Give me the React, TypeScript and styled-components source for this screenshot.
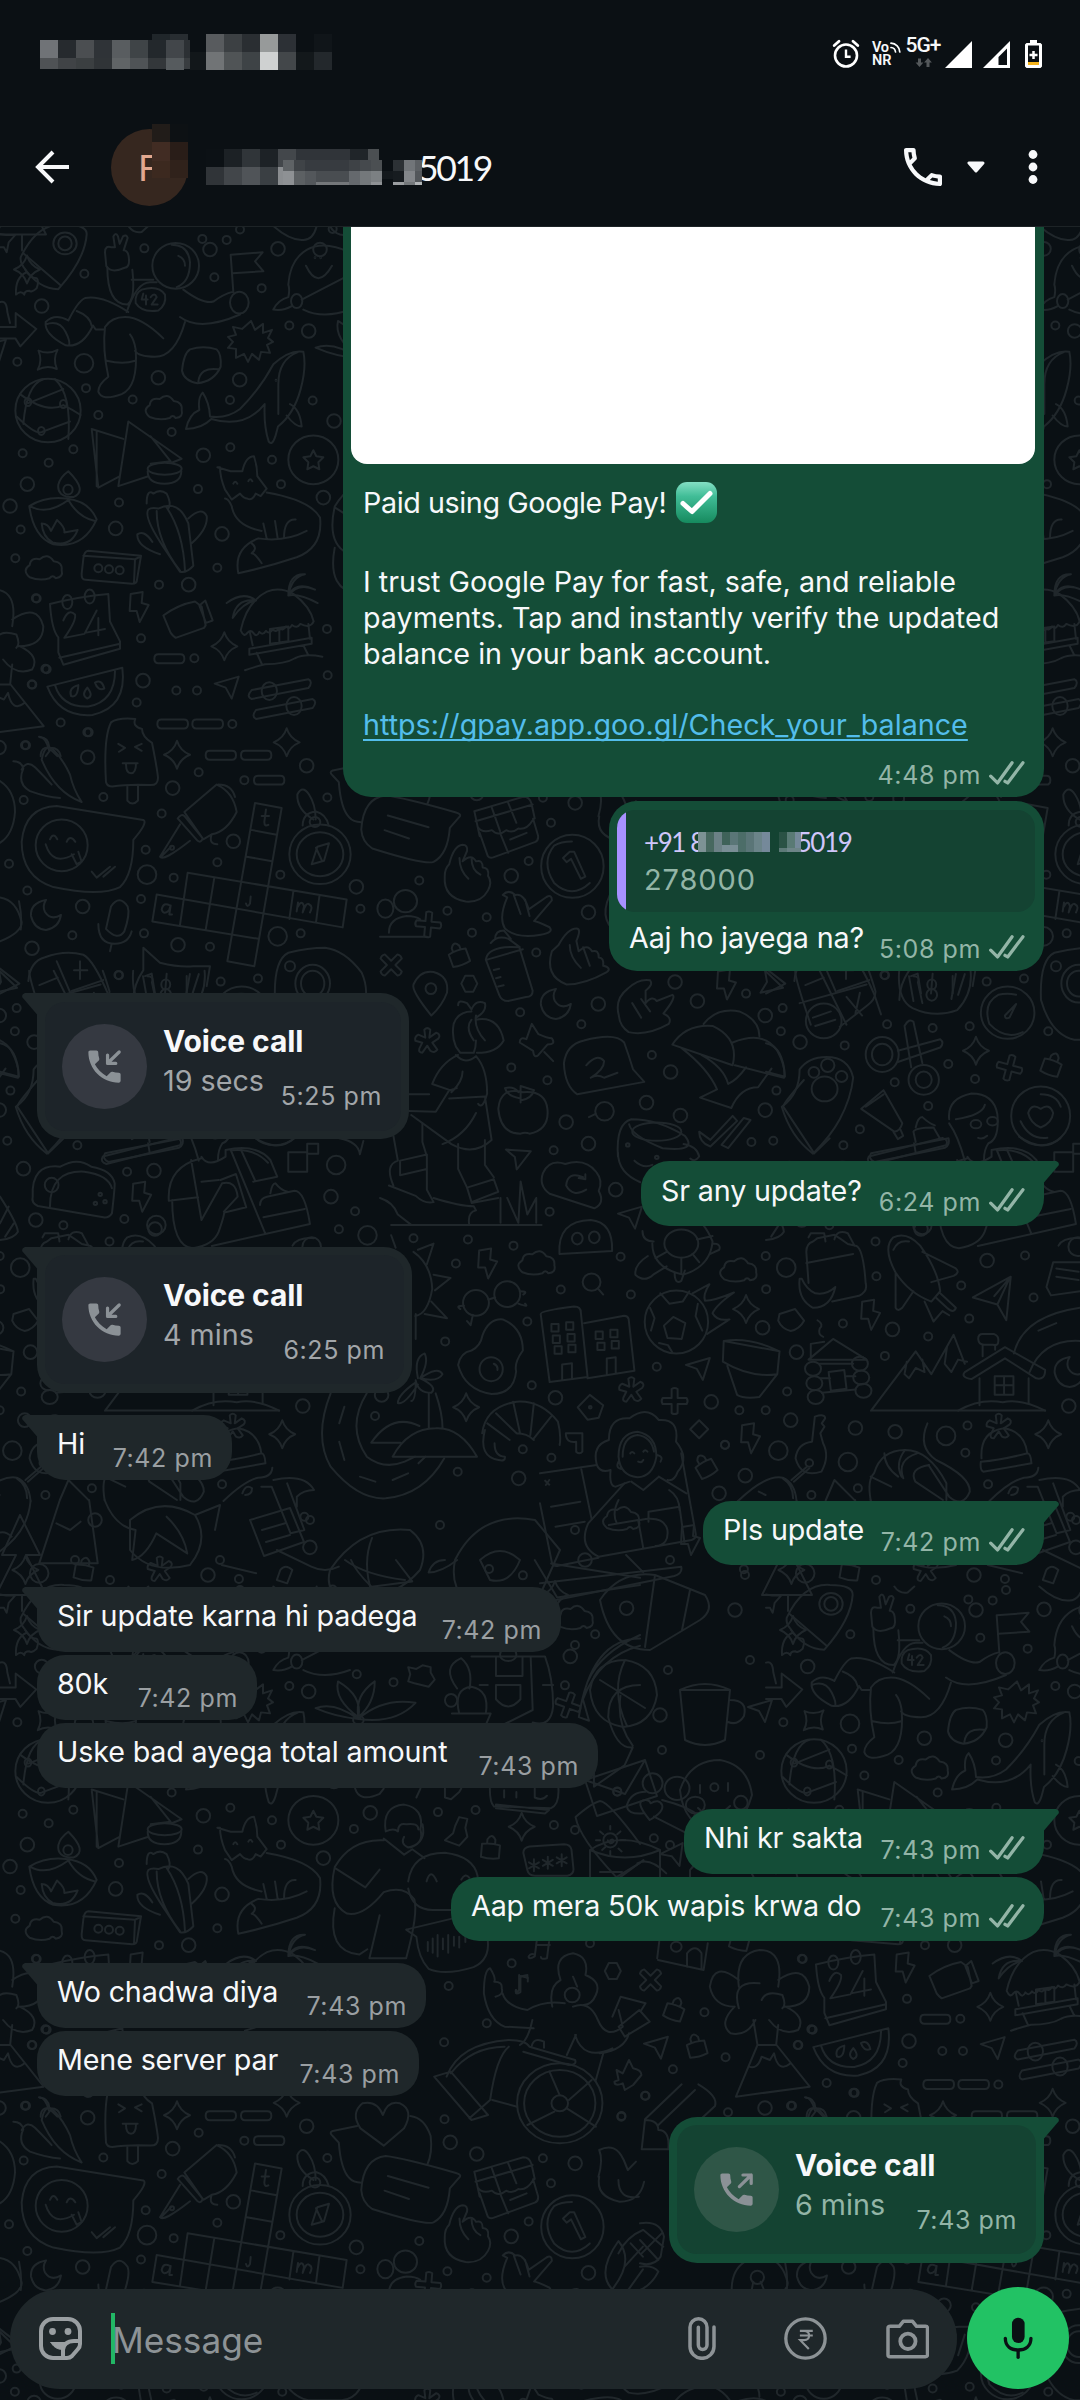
import React from "react";
import styled, { createGlobalStyle } from "styled-components";

const GlobalStyle = createGlobalStyle`
  * { box-sizing: border-box; }
  body { margin: 0; background: #0a1014; }
`;

const FONT = `Inter, "Open Sans", "Noto Sans", sans-serif`;

/* ------------------------------------------------------------------ */
/* Wallpaper                                                            */
/* ------------------------------------------------------------------ */

type Dot = [number, number];
type StampAt = [string, number, number, number?];
type Oval = [number, number, number, number];

interface SheetData {
  x: number;
  y: number;
  sx: number;
  sy: number;
  paths: string[];
  ovals?: Oval[];
  small?: Dot[];
  medium?: Dot[];
  large?: Dot[];
  stamps?: StampAt[];
}

const STAMPS: Record<string, string> = {
  sparkle: "M0-14Q3-4 13 0Q3 4 0 14Q-3 4-13 0Q-3-4 0-14z",
  bolt: "M-8-13L4-15L3-4L10-2L1 15L-2 4L-9 4z",
  cloud: "M-13 8q-8-7 0-12q1-8 10-6q8-7 14 2q9 1 8 9q2 7-6 8q-3-4-6 0q-10 3-20-1z",
  plane: "M-12-3L12-10L5 12L-1 1z",
  moon: "M0-15Q-16-12-15 1Q-12 14 0 15Q13 13 15 0Q5 6-1-3Q-4-9 0-15z",
  plus: "M-3-12q3-2 6 0v9h9q2 3 0 6h-9v9q-3 2-6 0v-9h-9q-2-3 0-6h9z",
  aster:
    "M-2-4L-3-12Q0-15 3-12L2-4L9-9Q14-7 11-3L5 1L10 8Q7 12 3 9L0 4L-5 11Q-9 11-8 7L-5 1L-12-1Q-13-5-9-7z",
  lock: "M-9-4q9-2 18 0v13q-9 2-18 0z M-4-5v-4q4-7 8 0v4",
  hex: "M-8 0l4-8h8l4 8-4 8h-8z",
  diamond: "M0-9L9 0L0 9L-9 0z",
  star: "M0-10l3 6 7 1-5 5 1 7-6-3-6 3 1-7-5-5 7-1z",
  burst:
    "M0-20l4 9 8-6 0 9 9-3-4 8 5 4-6 3 3 8-9-1-2 8-7-6-4 8-4-8-8 4 0-9-8-1 5-6-5-5 8-2-3-8 9 2z",
  tiny: "M0-6V6M-5-3L5 3M5-3L-5 3",
};

const SHEETS: SheetData[] = [
  {
    x: 0, y: 220, sx: 1 / 3, sy: 0.49745,
    paths: [
      "M0 28l18 2 28 0-20 15-6 20-8-10-12 0",
      "M62 75q50-70 130-66q70 0 68 20q-5 50-85 110q-60 0-105-45q-10-8-8-19z M70 67L180 130",
      "M80 105q-35 10-32 45q15-10 25 0q0-8 15-8q5 5 22-5q8-15 0-20q-20 0-35-18",
      "M315 65q0-15 20-10l10 0-5-22q8-10 14 0l5 15 10-15q10-5 14 3l-12 25q12 0 15 12q5 22-12 23q-40 12-55-3z",
      "M322 95q0 75 60 75q25-10 15-70 M395 120h65 M380 185q30-60 70-60h20 M535 72q20 5 20 20 M515 50q50 0 55 35q0 40-40 50",
      "M425 140q50-10 70 10q5 20-20 32q-50 5-68-15q-3-20 18-27z M430 148l-5 12h18m-5-8v18 M452 155q12-10 18 0l-15 15h18",
      "M550 140q60 30 90 24q30-15 60-20 M540 195q60 30 180-5 M700 145L692 70L788 65L765 83L790 103L698 107",
      "M555 205q-30 70-90 70q-50 0-60-12 M315 215q20-20 60-20q50 0 115 43 M315 215q-8 45 10 100q-30 15-30 30q10 20 70 5q50-15 42-90q-5-20-17-30 M320 283q50 8 85 0",
      "M385 185q-80-35-130-28q-20 5-50 45q-40-15-68 3q-5 25 60 47q50 5 82-40l8 8h25 M137 210q40-10 60 15q15 20 10 27 M230 183q40 10 45 30",
      "M0 215h47v-28l62 32-48 35-15-16H0 M0 165q20-5 22 20l8 22",
      "M558 420q10-30 40-38q-5-25 10-35q20 20 22 48q50 5 90-15q60-40 100-90q50-30 90-25q10 30-8 75q-20 50-68 75l-8 20q-10 20-20 10q-15-30-12-75q-60 50-160 30q-30 20-76 20z M835 330q0-50 60-65 M835 330v60 M870 370q30 10 35 45q-20 0-45-22",
      "M1050 65q-80-25-130-5q-50 20-55 70q5 10 0 25q-30 5-45 25q30 3 55-7 M910 180q60 20 140 0 M1050 110L905 160 M918 92q35 50 78 0",
      "M60 350q80 40 130 22q30 10 52 20 M85 368L190 340 M50 395q60 40 80 30l80-20 M130 320q-50 10-60 90 M165 320q50 30 40 120",
      "M275 420l20 118 62-22 M275 420l95 20 M290 425v110 M385 405l160 75-30 8 M385 405l-30 130 90-20 M452 435l60 50-60 5 M443 505q0 25 50 25q50 0 51-25",
      "M570 260q40-8 80 0q15 10 12 35q-20 30-70 33q-40-5-46-25q5-35 24-43z M595 325q5-30 60-25",
      "M652 497l40 8 35 0q10-30 35-30q10 20 10 40l28 25-18 15-15-5q-10 15-25 10q-10 0-22-10l-25 12-20-20q-15-25-15-45z M675 560q10 0 20 15q10 40 90 50 M800 548q130 15 160 50q10 60-70 80q-90 20-175 32q-15-50 60-70q80 8 145-15 M700 530q5-8 12 0 M745 525q5-8 12 0 M852 640q0-40 35-38 M825 605l8 35 M790 610l10 30 M755 650q20 10 0 20q10 0 30 20",
      "M88 575q50-20 110-15q70 5 92 42q-40 60-130 50q-60-15-72-77z M90 575q50 20 115-12q30 35 80 42 M205 505q60 40 15 52q-50 0-45-25q5-15 30-27z M125 610q20 0 28 15l18-22q25 15 22 25l40-5q-20 35-75 25q-30-10-33-38z",
      "M475 580q60-20 90 30l15 85q-20 15-40 12l-50-50q-60-60-45-75q10-5 30-2z M470 585q0 60 70 120 M500 578q50 50 55 128 M440 570q0-30 20-20q20-10 40 0q15 20 5 30 M565 600q40-25 55-5q5 25-45 55 M480 672q-70-15-68-40q20-10 45 15",
      "M265 665l158 10-12 48q0 8-15 8l-140-8q-12 0-11-12l5-30q2-15 15-16z M250 675l155 7-3 48 M405 682l18-6",
      "M150 772q90-15 175-20l5 55 30 40v15l-170 32-15-25v-30q-20-15-25-67z M178 880l182-28 M190 805q15-25 35-12q5 12-32 47l60-8 M290 785l-35 45 60-8 M295 800v35",
      "M490 795q45-22 95-28l20 10 12 38-5 5-85 20q-10-5-15-10z M598 775l18-10 22 40-20 5z",
      "M722 825q10 15 20 5q10-8 18 0q10 10 18-2q10 8 20-2q10 8 20-3q10 8 20-3q10 8 20-3q10 8 18-3q15 8 25-2q30 10 40-5q-10-30-60-55q-40-15-80-5q-60 20-79 78z M750 830l8 25 M925 812l5 30 M748 862l187-22v12l-187 22z M735 905q20-5 60-12q60 0 90-12q30-10 82-3 M770 870l15 22 M910 855l15 20 M810 822v30l55-5v-30z M838 820v30",
      "M865 755q0-45 50-43q-40 5-50 43q20-30 80-12q-50-15-80 12q30-5 88 15 M680 770q50-25 88-5q-60-5-70 35q30-30 70-35",
      "M142 938L367 900q15 80-90 95q-100 5-135-57z M165 935q20 45 100 43q80-10 80-72 M235 935q-30 5-22 22q20 5 22-22z M262 940q-20 15 0 22q20-5 0-22z M285 930q20-8 28 12q-20 5-28-12z",
      "M463 882q0-9 12-9h66q12 0 12 9t-12 9h-66q-12 0-12-9z M472 1013q0-9 12-9h68q12 0 12 9t-12 9h-68q-12 0-12-9z M577 1013q0-9 12-9h68q12 0 12 9t-12 9h-68q-12 0-12-9z M617 1076q0-9 12-9h67q12 0 12 9t-12 9h-67q-12 0-12-9z M723 1076q0-9 12-9h67q12 0 12 9t-12 9h-67q-12 0-12-9z M762 1126q0-9 12-9h67q12 0 12 9t-12 9h-67q-12 0-12-9z",
      "M755 945l170-22q15 5 0 18l-170 22q-18-5 0-18z M768 985l170-22q15 5 0 18l-170 22q-15-5 0-18z",
      "M318 1130q-8-90 15-120q20-10 73-7q-10 15 20 20q0 15 30 28q15 50 18 70q0 15-22 15q-70-2-115 3q-15 0-19-9z M382 1137v30q15 12 32 0v-30 M355 1053l20 8-18 8 M425 1053l-20 6 20 8 M368 1092h45 M378 1094q0 18 15 18q15 0 15-20",
      "M125 1085q10-35 35-20q30 20 50 50q10 30 35 55q-80-20-120-85z M40 1088q25 0 30 15q-20 30 20 45q50 12 90 14 M120 1040q25 0 28 20 M65 1105q15-20 40-5q30 20 50 35",
      "M65 1250q10-70 105-72l260 28q15 5-30 40q0 70-40 95q-60 20-200 0q-95-20-95-91z M137 1255q20 45 85 20 M150 1245q10-15 22 0 M200 1250q10-15 26 0 M275 1310l15 12 40-22 M310 1320l35-20 M215 1275l15 20 15-5-10-20",
      "M0 1128q45 20 45 62q-5 45-45 62 M0 1362q50 5 65 50q0 20-65 38 M0 1505l58 30-58 20",
      "M553 1190L650 1135q50 15 60 55q-30 40-75 45l-25 10z M533 1203q10-10 20-5l55 45q-5 10-15 5z M540 1215l-60 65q10 10 90-32 M483 1280l30-20 M635 1235q-10 20 17 20 M655 1135q40 0 50 25",
      "M765 1172L845 1182L763 1500L682 1490z M753 1226l77 10 M740 1280l76 9 M563 1312L1040 1366L1028 1422 M470 1356L1028 1422 M470 1356L457 1410L775 1445 M563 1312L540 1417 M643 1322L617 1427 M880 1350L868 1405 M958 1360L948 1412",
      "M785 1198h22 M798 1185l-5 25q0 10 12 6 M510 1378q-20-8-25 8q5 12 22 2l5-10-4 18h8 M752 1360l-2 14q-8 10-12 0 M890 1390l4-18 0 8q12-15 18 0l-4 12q10-22 20-16q12 4 2 16",
      "M908 1217q0-25 40-28q30 5 38 28 M940 1205q-50-20-48-50q15-20 35 0q20 20 20 50 M935 1295l17-35 35-7-15 35z M948 1262l18 26",
      "M318 1425l15-45q25-25 50 0q8 15-10 50q-20 20-55-5z M295 1415q0 40 50 40q40 0 50-25 M335 1455l-5 15",
      "M85 1530q5-40 50-48q60-15 115-5q30 10 75 80l20 40 M170 1490l40 62 M118 1538l55-15 M222 1508l40 0 M240 1490v36 M215 1550l95-22",
      "M400 1568q0-30 30-60v-45l50 30q60 10 100 7h50l-10 40 M435 1520l20-5 10 40 M500 1515l-5 40 M560 1520v35",
      "M825 1568q-5-80 40-95q60-10 110-10q60 5 110 50q20 30 10 60q0 70-70 75h-100q-70-10-100-80z",
      "M385 12q15 15 40 12l20-12 M820 12q50 30 90 28q30 0 40-28",
    ],
    ovals: [
      [195, 47, 35, 22], [195, 47, 20, 14], [527, 92, 70, 46], [718, 166, 28, 22], [890, 163, 17, 14],
      [144, 383, 98, 64], [84, 366, 10, 8], [190, 370, 10, 8], [124, 424, 10, 8], [494, 500, 51, 12],
      [940, 482, 75, 49], [204, 542, 14, 10], [202, 768, 15, 14], [269, 757, 15, 14], [295, 700, 12, 8], [327, 702, 12, 8],
      [359, 704, 12, 8], [808, 947, 23, 18], [882, 977, 23, 18], [185, 1257, 78, 52], [516, 1262, 6, 4],
      [960, 1275, 92, 60], [960, 1275, 70, 44], [945, 1210, 16, 10], [938, 1535, 52, 38], [938, 1535, 35, 26], [870, 1500, 15, 10],
      [945, 76, 1, 1], [962, 76, 1, 1], [828, 322, 1, 1],
    ],
    small: [
      [253, 108], [433, 57], [607, 38], [680, 40], [643, 115], [785, 137], [868, 212], [52, 285], [258, 338], [398, 361],
      [295, 392], [220, 461], [68, 469], [146, 488], [515, 426], [691, 457], [690, 362], [816, 482], [843, 531], [594, 541],
      [357, 568], [62, 622], [46, 680], [110, 761], [477, 733], [652, 699], [423, 841], [981, 822], [983, 915], [140, 903],
      [97, 934], [410, 970], [182, 1010], [266, 1030], [78, 1056], [596, 1110], [71, 1166], [310, 1160], [485, 1193], [437, 1266],
      [27, 1294], [521, 1322], [652, 1291], [841, 1316], [982, 1161], [423, 1365], [82, 1348], [217, 1438], [432, 1434], [630, 1461],
      [662, 1531], [357, 1518], [902, 1434], [774, 1525], [998, 18], [529, 946], [591, 946], [583, 881], [697, 1013], [733, 1126],
      [938, 363],
    ],
    medium: [
      [125, 173], [834, 58], [926, 223], [475, 317], [719, 321], [82, 531], [30, 575], [347, 620], [666, 631], [566, 733],
      [970, 558], [1002, 404], [429, 926], [263, 1080], [518, 1142], [700, 1249], [920, 1097], [534, 1457], [248, 1380],
      [96, 1464], [610, 473],
    ],
    large: [[252, 288], [441, 1316], [833, 1440]],
    stamps: [
      ["sparkle", 143, 281, 45], ["sparkle", 673, 857], ["sparkle", 531, 1075], ["sparkle", 860, 1050], ["bolt", 416, 778],
      ["cloud", 488, 380], ["cloud", 128, 702], ["plane", 680, 938], ["moon", 138, 1397], ["burst", 753, 243], ["star", 940, 483],
    ],
  },
  {
    x: 380, y: 800, sx: 0.4464, sy: 0.41454,
    paths: [
      "M155 155q10-45 30-47q12 0 10 15l-10 25q20-20 30 0q15-5 15 15q15 0 12 20q10 15 0 35q-15 30-50 27q-50-10-47-60q0-20 10-30 M178 140q0 30 20 50 M205 140q0 30 20 40",
      "M470 200q-40 40-80 0q-30-50 0-90q15-10 40-10 M410 140l15-15h10l25 60-10 5-22-48-10 8z",
      "M285 235q-20 50-5 75q25 25 80 15q30-5 20-18q-30-15-35-15l40-50q0-15-12-8l-40 30q-10-40-30-35q-15-15-28 0z M300 230l15 45 M325 240l10 40",
      "M400 350q20-40 40-40q12 0 0 30l5 25q20-20 30 0q15-5 15 15q12 0 10 20q20 5 8 15q-50 30-90 30q-50-20-33-80z M425 350q0 30 25 55 M455 355l15 45",
      "M535 520q-10-40 20-65q25-25 50-20q8 10-10 25v30q15-20 25-5l35-15q10 5-20 45q20 10 12 25q-50 30-90 20q-20-15-22-40z M565 490l20 35 M585 480l20 30",
      "M20 320q0-35 40-40q20 0 30 8 M0 330h105",
      "M237 385q5-35 75-30l30 105q0 15-15 15l-40 10q-15 0-20-15z M240 385l80-25 M248 345q15-20 40-10l25 20 M258 335q0-20 20-20l15 20 M255 410l12-3 M260 430l10-3 M265 450l12-3",
      "M115 520q-45-60-40-75q15-35 45-30q35 10 30 50q-10 30-35 55z",
      "M205 510q-30 0-40 30q-5 30 5 55l10 15h30q5-15 5-30 M175 495q0-15 20-5l10 15q10-25 30-15q5 20-20 35 M215 530q50-10 62 50q-15 30-60 30 M205 530q-15 20 5 50 M215 520q-5 30 20 60 M170 615q20 25 45 3 M175 615q-40 20-58 70l40 15 15-5 M215 618q25 30 25 90q-10 40-20 25 M155 720l80-5 15 105q-40 40-90 10l-90-70 M155 700l-30 52-60-2 M65 710h45 M140 830q50-20 75-75 M185 655q0 25-25 50",
      "M95 780v45l10 35 M45 870l60-15v35l-60 15z M175 830v60l20 45 M235 820v60l20 30 M195 935l60-20 10 30-60 25z M105 880v60l15 30q-20 5-40-15l-60-25 M0 960q30 10 40 40l30 25 M25 1025H362 M270 960v60 M285 960l25 60 5-100 15 80 20-40v60 M120 960q60 20 90 20l5 10q-20 5-15 35 M30 930q-20-50 10-60l-10-60 M205 972l60-12",
      "M340 540l15 25q20 10 30 10q10 15-10 15l-20 25q-10 10-12-10l-30-20q0-15 15-8z M368 608l20 22",
      "M412 635q5-45 45-55q70-20 90 5q10 30 20 65l25 30-150 30q-28-20-30-75z M462 640q25-30 40-10q0 20-30 40q15-10 30 0l30-12",
      "M320 705q-50-15-55 40q5 60 50 60q10-5 20 0q45-10 40-60q-5-45-55-40z M315 730v-40l30 10q-5 20-30 25 M315 720q-30-5-35-25q20-5 30 10",
      "M365 900q15-35 50-22q45-15 70 20q15 20 5 45q15 30-10 42l-100-35q-25-20-15-50z M455 910q-35-15-38 20q15 30 45 10 M445 912l15 3v-12",
      "M402 1095q-5-80 70-82q50 5 48 75z",
      "M533 860q-5-80 30-90q60 0 120 40q30 40-50 30q-70-30-75-58 M533 850q0 50 50 72 M680 830q30 5 35 30q-10 15-20 5 M570 870q20 20 40 10",
      "M655 590q30-50 90-45q60 30 45 95z M725 540q30-40 80-30q45 20 45 60 M790 585q70-30 100 20q20 40 15 65l-110-30 M675 598q60 50 80 100l-38 20 70 25q20-50 60-50l30-45 M720 615q50 30 60 70q20-10 40-40",
      "M900 740q40-30 40-90q20-30 60-30q50 0 60 50q-5 50-30 100q-20 40-60 83q-50-40-70-113z",
      "M1078 745l50-45 42 80q-5 20-18 20z M1088 740l40-30 M1150 800l10 18 12-8-6-15",
      "M715 800l25 20 50-58 10 12-60 62q-25-10-25-36z M765 832l50-65 15 5-50 68z",
      "M1160 605l95-28q10 8 0 20l-95 35 M1175 545q10-20 20-10l20 100 M1175 545l15 100",
      "M985 412l60 130 M940 490l150-45 M930 412q0 20 35 130 M1095 412q10 30 15 50q0 20-20 35l-60 50 M970 525l40-15 M975 545l45-15 M1045 475l35 45 M1065 515l10-50",
      "M1163 412q-5 70 30 90q50 25 100 5q35-40 30-95 M1185 425l10 60 M1205 440l10 50 M1290 420l-10 60 M1310 420l-15 50 M1195 425q15 0 10 15",
      "M1440 560q-40 20-75-20q-15-50 20-70q20-5 40 0 M1400 520l25-28-15 33q-10 5-10-5z",
      "M1275 770q-5-50 50-62q50 0 58 50q5 60-20 70q-10 15-10 40 M1275 780q20 30 35 90 M1290 770q60-10 65-35 M1340 815q10 5 20-5 M1385 845q50-5 80 30",
      "M1480 745q-20-15-28 10q5 25 28 35q25-10 28-35q-8-25-28-10z M1435 775q20 45 60 40 M1525 740q-10-30-45-30",
      "M1095 860l165-45q15 5 8 18l-165 45q-15-5-8-18z M1200 825l-5-25q5-10 45-10l15 28 M1200 790q5-25 15-25q15 15 28 20",
      "M610 1070q0 60 70 75q60-20 65-80q-10-25-20-38 M588 1040q0 25 25 25 M600 1100q-30 20-28 45q20 20 40 0l30-20 M660 1140q0 30 15 20l8-25 M745 1070q20 0 15 15l-20 10 M642 1090l-25 15 M700 1095l15 20 M675 1104v38 M710 1060l35-8",
      "M488 1178l12 15 M468 765l15-8",
      "M243 1205l15-5 M188 1220q-20 0-8 8 M208 1242l-5 25-8-10 M313 1185q20 0 8 8 M310 1215q25 10 15 0",
      "M230 1290q15-40 45-37q45 20 45 75q-20 30-15 50q-5 55-55 55q-60-10-75-70q5-30 30-35q20-10 25-38z M255 1360q10 5 8 15",
      "M75 1090q40 30 42 90q-10 60-38 65 M85 1085l35-15-15 50 M120 1145l38 8-35 30 M115 1210l35 40-50-10 M80 1240v60 M25 1050l10 30",
      "M85 1395q-10-50 15-60q10 20-10 60q40-30 50-10q-10 20-50 10q40 20 25 35q-30 0-35-30q0 50-10 50 M85 1410q-30 50-45 45q0-20 40-50",
      "M360 1240q0-8 75-18q15 0 15 15l15 155-85 12z M457 1262l90-18q8 0 10 8l13 125-105 18 M408 1400v-38l22-3v38 M508 1385v-38l20-3v38",
      "M384 1264h16v18h-16z M417 1260h16v18h-16z M387 1292h16v18h-16z M420 1288h16v18h-16z M391 1318h16v18h-16z M422 1314h16v18h-16z M483 1282h16v18h-16z M516 1278h16v18h-16z M487 1309h16v18h-16z M519 1305h16v18h-16z",
      "M657 1247l27 15-8 38-32-2-8-30z M628 1190l20 25 30-5 15-25 M712 1215l-5 30 15 35 M605 1225l10 25-8 30 M625 1310l20 5 10 18 M700 1190l38-22q-15 25-10 40q20 0 65-20q-40 30-48 50q10 20 38 15l-50 35",
      "M955 1090q0-20 15-25l10-8 38-8q15 10 30 22l20 5q15 10 20 90q5 20-15 30l-60 14 M955 1090l5 75 M955 1117l105-22 M960 1055l5-10h30l3 20 M1018 1060q5-25 30-15l15 30 M940 1155q-5 50 30 70q40 0 50-50q-20 20-45 15q-20-10-30-35z",
      "M1150 1055q30-15 60 20q40 60 45 110l-20 25q-50-20-80-70q-30-60-5-85z M1150 1085q10-25 35-20 M1215 1090l75 40q10 10-5 18l-50 15 M1155 1140v85q5 10 15 0l25-40 M1220 1210l20 48 20-25 15 10 M1255 1190l35 35q-5 15-20 0l-25-25",
      "M1328 1200l85-50-10 105-20-38z M1383 1217l28-65-35 45",
      "M1568 1115h-60l-15 60 10 20 65-10 M1515 1130l50 8 M1515 1150l50 8 M1520 1075q10-20 48-18",
      "M1420 1335q20-90 148-110 M1455 1380q30-80 113-75 M1475 1280l40-18",
      "M770 1305l125 25-5 55q-60 10-122-30z M770 1305q60-10 125 25 M778 1365l22 70q15 10 50 5l40-55",
      "M960 1350l55-50 75 50z M965 1350v-38l30-5 M985 1360h75 M988 1395h20 M1045 1390h20 M990 1430l75-8 M1005 1380l35-5 5 45-35 5z M980 1255q15 10 5 20q-5 15 8 20",
      "M1100 1473L1200 1330l35 55 50-95 25 70 M1100 1473H1490 M1180 1355l-5 30 10 10 15-25 20 10-5-30 M1270 1320l-5 40 15 20 15-30 20 5 M1310 1380l90-60 90 55q0 25-20 20l-70-48-75 50q-25-5-15-17z M1343 1395v65 M1453 1395v60",
      "M1340 1300q0-12 10-12h25q12 5 10 18q0 12-12 8h-20q-12 0-13-14z M1350 1314v28 M1378 1314v12 M1377 1390h42v45h-42z M1398 1390v45 M1377 1412h42 M1295 1473q50-30 100-20q40-10 95 20",
      "M470 1435l30 25-10 30-25 5-22-30z M895 1240l35-12 20 28q-10 20-30 25q-20-5-28-25z",
    ],
    ovals: [
      [431, 160, 70, 76], [57, 244, 26, 27], [12, 262, 18, 22], [114, 455, 12, 13], [442, 1058, 12, 14], [480, 1055, 12, 14],
      [996, 697, 29, 30], [972, 657, 12, 13], [1003, 640, 15, 16], [1034, 667, 13, 13], [1125, 614, 37, 42], [1125, 614, 23, 26],
      [1218, 675, 34, 36], [1218, 675, 18, 20], [994, 533, 40, 42], [1236, 445, 10, 12], [1236, 470, 12, 14], [1406, 513, 60, 63],
      [1335, 782, 12, 10], [1372, 775, 12, 10], [1480, 762, 66, 71], [675, 1070, 38, 34], [474, 1163, 20, 21], [215, 1213, 29, 31],
      [285, 1192, 29, 31], [249, 1373, 26, 29], [664, 1259, 71, 76], [970, 1372, 18, 17], [973, 1407, 18, 17], [976, 1440, 18, 17],
      [1075, 1360, 18, 17], [1078, 1393, 18, 17], [1083, 1425, 18, 17], [555, 832, 4, 4], [620, 862, 4, 4], [471, 1465, 3, 3],
      [620, 800, 55, 22],
    ],
    small: [
      [383, 55], [333, 147], [88, 194], [151, 267], [239, 283], [206, 320], [350, 368], [314, 512], [451, 541], [294, 645],
      [375, 676], [389, 845], [609, 615], [820, 467], [902, 502], [898, 558], [888, 701], [832, 825], [881, 822], [1041, 592],
      [1136, 541], [1238, 550], [1321, 546], [1153, 681], [1228, 738], [1075, 794], [1038, 833], [1273, 637], [1333, 673],
      [1130, 422], [1497, 558], [380, 993], [197, 1060], [299, 1075], [75, 1057], [170, 1118],
      [146, 1306], [330, 1258], [405, 1181], [562, 1193], [539, 1102], [864, 1100], [865, 1180], [1110, 1065], [1112, 1149],
      [1037, 1263], [1302, 1171], [1320, 1251], [1228, 1294], [1131, 1341], [1445, 1099], [1464, 1200], [912, 1427], [805, 1472],
      [864, 1472], [620, 1367], [340, 1412], [773, 1556], [1316, 1509],
    ],
    medium: [
      [294, 183], [467, 271], [661, 439], [711, 485], [489, 492], [863, 520], [941, 584], [651, 656], [597, 730], [673, 761],
      [863, 748], [467, 829], [417, 777], [528, 940], [1148, 1277], [1360, 1111], [933, 1332], [857, 1273], [742, 1452],
      [393, 1442], [1543, 1462], [1065, 1515], [1154, 1524], [920, 1496], [1212, 1035],
    ],
    large: [[910, 1128], [1268, 1534], [503, 751]],
    stamps: [
      ["plus", 108, 300, 5], ["plus", 25, 398, 45], ["lock", 176, 375, -20], ["hex", 200, 443], ["moon", 394, 492],
      ["aster", 106, 583], ["plane", 305, 860, 20], ["cloud", 348, 1120], ["cloud", 800, 1137], ["bolt", 240, 1118],
      ["bolt", 1098, 1242], ["bolt", 775, 445], ["plane", 870, 440, 60], ["plus", 1410, 646, 15], ["lock", 1505, 640, 20],
      ["sparkle", 1335, 605], ["sparkle", 820, 1228], ["sparkle", 193, 1465], ["sparkle", 1497, 1530], ["aster", 563, 1425],
      ["plus", 660, 1450], ["diamond", 715, 1518], ["plane", 712, 1370], ["moon", 1545, 1380], ["plane", 560, 1005],
    ],
  },
  {
    x: 0, y: 739.5, sx: 0.4082, sy: 1 / 3,
    paths: [
      "M938 45q-15-45-50-35q-30 30-5 75l57 52 50-52q25-55-10-75q-30-10-42 35z",
      "M875 78l-60 15q-10 5 0 15l15 20q5 80 25 105q10 15 30 15 M1005 48q35 5 50 60q5 50-8 85",
      "M885 270q5-95 60-102q40 5 170 50q15 5 12 12l-25 35q-5 80-40 102q-20 10-150-40q-25-20-27-57z M950 228l100 35 M942 272l60 25",
      "M1175 290l-13-75 120-43q15 0 20 20l8 45 M1175 280l20 70q5 8 15 3l100-45q10-5 8-20l-12-50 M1205 205l20 70 M1245 190l20 60 M1165 245l140-50 M1170 262q10 20 35 10q15 20 35 0q15 10 30-5q20 5 35-25 M1250 300l40-20 M1225 280l20 60",
      "M1468 150q40-25 60 30l10 30 20-25 M1468 230q-10 60 50 75q50 0 60-60 M1468 150q10 30-2 80 M1515 240q0 60 50 50",
      "M1500 568q-40-50 15-145q40 60-15 145 M1515 460q20-50 60-70 M1530 500l45-60 M1540 568l35-60 M1545 430l30 40",
    ],
    medium: [[873, 442], [1103, 127], [1168, 162], [1409, 190]],
    small: [[883, 508], [1089, 58], [1330, 175], [1522, 50]],
  },
  {
    x: 640, y: 729.5, sx: 1 / 3, sy: 1 / 3,
    paths: [
      "M5 178l10-90 110-105 M5 178h80l140-130q10-30-50-65 M15 90q40 0 40 30q35 0 30 58 M55 105L165 0",
      "M495 22q20 0 30 40 M500 80q0-30 30-25q25 0 30 25 M515 80l15-20 20 20",
      "M275 600q0-60 40-85 M435 515q10 50 5 85 M340 575l-5 25 M362 575l10 25",
      "M0 400q60-10 72 40l-10 60q-20 30-62 20 M10 420l60 50 M0 450l55 60 M65 430l-60 60 M0 530q40-5 55 15q-20 40-55 55",
    ],
    ovals: [[352, 562, 20, 20]],
    small: [[264, 67], [453, 47], [640, 8], [15, 17]],
    medium: [[375, 54]],
  },
  {
    x: 0, y: 980, sx: 0.3444, sy: 1 / 3,
    paths: [
      "M50 380L140 520L185 475 M50 380q0-10 60-80 M0 190q50 10 55 100l-55-15 M0 650q50 80 52 105q-10 20-52 25 M0 730l25-50 M15 770l25-40",
      "M95 650q-5-100 80-90q50-30 90 0q60 10 68 50q0 20-8 90q-10 15-25 12L110 678q-20-10-15-28z M145 680q0-110 100-105q70 10 80 50",
      "M305 520l225-45q5 20-10 28l-205 43q-20-10-10-26z M430 490l5 30",
      "M490 660q-5-100 95-125v-5q20 35 70 0v-20q90-20 130 30l20 50-70 15 M490 662l85-10 M555 540l30 180 60-110q40-10 45 40l-40 45 M585 605l50-5 M500 660q0 140 60 145q60-10 75-50q20-60 15-60 M670 510l100 250 M700 510l40 90 M640 600l45-18 30 100-60 15 M615 798L900 732 M755 675q0-20 20-25l80-18q30 0 45 100 M765 712l120-25 M785 640q5-30 15-30q15 20 35 25",
      "M837 517h55v58h-55z M892 491h32v30h-32z",
      "M960 1240q-50 130 0 220q80 100 160 95q110-10 170-120 M1065 1240q-60 100 0 190q50 40 110 15l30-15 M1000 1280l-15 50 M985 1385l15 55 M1045 1490l45 15 M1140 1500l45-20 M1215 1450l20-20",
      "M1140 1430h245q-50-90-120-85q-80 0-125 85z M1078 1388h85 M1078 1388q60-90 140-50 M1245 1240v105 M1265 1240q20 60 20 105",
      "M1400 1360q10-80 100-95q70-5 120 60q10 40 5 70 M1408 1350q-20 80 40 90q20 5 18-10q-30 0-30-40 M1440 1300l60 60 M1490 1265l20 95 M1415 1330l65 50 M1550 1270l-10 95 M1600 1310l-50 65 M1500 1360q30 0 50 20",
      "M735 470q70 50 120 5 M985 475q55 10 60 48l10-40",
    ],
    ovals: [[150, 615, 20, 22], [291, 643, 5, 5], [277, 670, 5, 5], [305, 665, 5, 5]],
    small: [[369, 575], [361, 717], [184, 736], [1031, 694], [984, 748], [1089, 1308], [1329, 1475], [1518, 1408]],
    medium: [[68, 566], [447, 572], [104, 720], [961, 650], [1506, 1495], [1108, 1245]],
    large: [[976, 555], [454, 735], [1067, 766], [905, 800]],
    stamps: [["bolt", 410, 650]],
  },
  {
    x: 540, y: 1140, sx: 0.3444, sy: 1 / 3,
    paths: [
      "M165 975q-15-60 35-75q0-70 60-65q50-40 85 5q60-5 50 65q40 50 5 90q-10 30-30 25 M165 975q10 25 40 15q-5 50 15 50l40-15",
      "M228 950q0-70 55-75q55 10 55 75q-10 60-55 62q-50-5-55-62z M240 950q0-60 43-65q40 5 48 50 M228 965q-10 20 10 22 M340 945q20 5 10 20 M262 940q5-8 12 0 M300 935q5-8 12 0 M285 965q10 5 15-5",
      "M265 1025l35 25 45-40 M345 1010l80 50 M245 1030L140 1150q-30 70 30 100L440 1200q15-5 12-20L410 940 M375 1050q30 20 30 60 M228 1080q-20 40-5 70 M200 1155l85-15 15 85 M315 1115l90-15 15 110 M315 1145v-30 M290 1140q70-15 80 30q5 45-35 48",
      "M0 1000l165-25 M120 988l30 150 M32 1100l85-15 M45 1160l85-15 M0 1090l35 180q5 10 15 8l120-25 M15 1022l12 12 M27 1020l-10 15 M0 1330l410-50q5 20-20 28L0 1390 M250 1245l50 52",
      "M790 905l8-75q30-10 30 5l-10 15 8 10-12 20 8 30q20 40-5 85q-60 20-75-40q5-45 48-50z M775 980l-45 40 M782 985l-45 40",
      "M575 1083q80-80 130-70q35 15 40 70 M705 1015q30 20 30 60 M635 1055l20 10",
      "M830 1080l25-60 60 62 M830 1080l-60 190h170l-25-190 M820 1150l40 20 30-25",
      "M575 1083q-70 50-80 130q20 70 130 40q110-60 120-170 M560 1130q30 30 20 90 M650 1180q20-10 40 10",
      "M960 1080q-10-60 10-80q20-70 90-70q70 0 120 100l0 50 M960 1010l60 30 M1000 940q0 40 40 70 M1060 930q-30 40-10 80 M1095 940q-60 20-40 75 M1130 975q-60 10-40 50l80 55 M1125 850q-30 70 25 110q100 50 98 95q-20 50-60 15l-60-95",
      "M960 1080q30 80 90 90l-10 90q40-10 70-80l90 60q-10-60-60-110",
      "M1282 955q-5-80 65-90q60 10 68 75 M1280 965q60-5 135-25q10 0 12 30l-140 25q-10-5-7-30z",
      "M1305 1083q60-60 100-70q40 0 42-30 M1360 1060q10-30 28-15q0 20-20 20 M1415 1040l30 0 55 140 40-10-50-140 M1450 1020q90-20 118 30q-30 0-50 20v30",
      "M1460 1230l100 50q40 20 80 0 M1470 1290q15-20 35 0l-15 40-30-10z M1400 1300l-100-25",
      "M75 880h48v55q-8 10-18 0v-30q-30 5-30-25z",
    ],
    ovals: [[782, 969, 11, 11]],
    small: [[537, 914], [33, 953], [788, 1065], [923, 1045], [1235, 938], [1301, 1033], [592, 1288], [1350, 1317], [1540, 1130]],
    medium: [[596, 1007], [520, 1060], [1260, 1305], [1556, 1222]],
    large: [[692, 932], [894, 966], [770, 1300]],
    stamps: [["bolt", 610, 895], ["lock", 480, 980, -30], ["aster", 1332, 862], ["sparkle", 730, 1290], ["lock", 900, 1290, 10], ["aster", 1120, 1290]],
  },
  {
    x: 0, y: 139.5, sx: 1, sy: 1,
    paths: [
      "M330 70q30-45 80-40q20 15 10 40q-30 35-80 25q-15-5-10-25z M345 60q20 15 60 20 M372 38q-10 25 0 55",
      "M250 20l40-12 14 34-40 14z M262 30l24-7 M266 42l24-7",
      "M455 60q25-50 80-40l25 30-20 45q-40 25-75 5q-15-15-10-40z M480 60q20-18 40 0q-10 25-30 20z",
      "M130 20q30-25 65-5q15 25-5 50q-40 10-60-15z M195 15l25-10-5 25",
      "M20 15l-18 40h14l-20 40h50l-20-40h14z M22 95v16",
      "M600 100q20-30 55-25l50 20q10 15-5 25l-50 30q-40 0-50-50z M655 75l-10 72 M690 90l-8 40",
      "M590 190q5-30 35-30q30 5 32 35q-5 30-34 32q-30-5-33-37z M600 180l45 28 M625 160q-15 30 2 66",
      "M680 190h50l-5 50q-20 10-40 0z M680 190q25-12 50 0 M730 200q18 0 14 16q-6 10-16 6",
      "M585 280l60-20 12 36-60 20z M585 280l40 14 20-34",
      "M680 290q10-30 40-30q28 5 32 35q-10 35-35 40q-34-10-37-45z M700 285v8 M728 283v8 M698 308q15 15 32-2",
      "M590 350q30-20 70 0v50q-35 15-70 0z M590 350q35 15 70 0 M600 372h22 M600 384h34",
      "M690 370q20-25 55-10l10 20-20 25q-30 10-45-10z",
    ],
    small: [[110, 80], [240, 90], [310, 20], [440, 25], [575, 30], [670, 60], [745, 75], [575, 145], [668, 170], [750, 160], [572, 240], [662, 250], [760, 255], [670, 345], [575, 330], [745, 345], [680, 425], [220, 60], [75, 60]],
    medium: [[320, 110], [95, 20], [430, 115], [585, 60], [735, 110], [660, 215], [672, 385], [210, 110]],
    stamps: [["sparkle", 27, 130], ["sparkle", 555, 95], ["bolt", 690, 40], ["plane", 760, 210], ["cloud", 620, 20], ["plus", 568, 205, 20], ["hex", 725, 30], ["lock", 740, 440, 15]],
  },
  {
    x: 0, y: 199.5, sx: 0.4082, sy: 0.3571,
    paths: [
      "M860 0q10 30 50 75l100-15q-20-30-40-60 M1310 0l55 105 203-35 M1350 10l218 40 M1050 35q10-35 40-35 M1050 35q30 0 70-35",
      "M878 440q-60-50-50-100q60 40 50 100 M878 440q-10-60 40-100q0 60-40 100 M878 445q-60-50-105-30q50 25 105 30 M878 445q60-60 140-45q-50 60-140 45",
      "M1000 300l20 5 15-10 20 5v15l10 20-15 20-35-10-15-5 5-20z",
      "M1107 430h95l-10 27 M1125 430q-15-70 30-75q45 10 35 75 M1120 360q-40-60 10-85q30 30 20 85",
      "M1155 270h180q20 60 20 140q-5 60-50 45 M1215 270v55h65v-55 M1215 350h60v40q-30 40-60 0z M1330 350h25 M1195 350h-20 M1300 270l5 150-70 40",
      "M1568 220q-120 0-150 220l25 10-15-60q40-120 140-150 M1490 440q0-90 78-90 M1490 440q20 90 60 85l-20 50-75 60v-50 M1520 380q-10 80 30 140 M1440 340q30-80 128-130",
      "M945 760q-10-70 45-75q50 10 40 70q10 40-30 50q-20-10-10-30 M945 760q20-10 30 0q0-25 20-20q30-5 30 15 M1035 740q10 50-30 65 M940 780l50 45 20-15 30 25 M820 860q40-80 120-75 M820 862l75 55 35-50 M820 860q-20 100 30 130q40 10 90-60q50-20 75 20q10 40-20 165h-90l25-120 M820 975q-20 120 60 130l20-15",
      "M1000 900q10-80 90-80q70 10 80 65q0 40-10 60 M1000 920q10 60 60 60h45 M1045 900q10-40 25 0 M1130 895q10-20 20-5",
      "M995 1035l110-30 M995 1035l25 20q5 60 30 90q40 20 110-5q40-20 35-75 M1048 1070v25 M1060 1060v40 M1072 1050v60 M1085 1060v30 M1098 1050v50 M1112 1055v25 M1125 1055v30 M1140 1050v20",
      "M1115 745l10-25 20 5-5 25 5 25-20 25-35-15 20-20z",
      "M1282 820q0-15 15-18l85-6q15 0 18 15l5 55q0 15-15 18h-80q-15 0-18-15z",
      "M1410 720q40-40 60-45q20 0 98 120 M1410 720q10 60 100 168l58-40 M1495 745v10 M1495 815v12 M1460 785h10 M1520 785h12 M1470 760l8 8 M1515 808l8 8 M1520 760l-8 8 M1475 812l8-8 M1495 785q8-6 8 4q-8 10-14-4",
      "M1200 640q0 40 10 50l140 5q20-10 18-55 M1235 645v20 M1265 650v15 M1310 640v25q20 10 30-5 M1215 685l130 15-10 10-120-15z",
      "M1315 1065l-5 45q-15 10-15 0q5-10 15-5 M1345 1070l-5 45q-15 5-15-3 M1315 1078h32 M1275 1165v45q-15 10-10-5 M1275 1165l18 5v10",
      "M870 640q10 40 60 15l10-15 M1020 665l10-25 M1090 640v25l15 5 20-20 5-10",
    ],
    ovals: [[878, 448, 13, 12], [1105, 393, 15, 18], [1245, 265, 20, 18], [1495, 785, 17, 20]],
    small: [[874, 320], [964, 342], [1384, 351], [1458, 208], [1198, 25], [1281, 43], [1512, 648], [1073, 706], [1165, 700], [1357, 742], [867, 753]],
    medium: [[1397, 270], [907, 708], [1535, 135]],
    stamps: [["lock", 1202, 808, 5], ["sparkle", 1278, 747], ["tiny", 1308, 855], ["tiny", 1342, 848], ["tiny", 1376, 841], ["cloud", 1405, 165]],
  },
  {
    x: 430, y: 419.5, sx: 0.41454, sy: 1 / 3,
    paths: [
      "M130 640q0-70 15-75q15 30 10 40q20 0 18 20q5 20-15 25 M130 640q10 80 50 100l70 5 M175 640q10 40 60 50q40-30 90-20 M247 720q-10 60-30 75",
      "M295 680q-10-60 20-80q-20-70 30-80q40 10 30 65q40 20 25 60q-10 30-30 30 M345 590l10 30 M345 680q40-20 60 40q20 60 60 20l-10-50 M455 740l50-50 25 35-60 45z M440 710l20-60 60 20-10 20 M410 820q60-10 70-60 M350 765q20 80 90 40 M330 825l22-60",
      "M313 946l-25-72 M330 985l70 55 M335 960l55-60 M300 995l-65 40 M40 890q30-100 150-110q40 0 50 20l110 40q5 15-15 15l-110-40 M10 890l40-15 90 130-40 15z M50 880q50-80 130-80 M190 800q-30 30-45 160l-50 55 M150 960l60 20 M400 900l18-80 M245 800q5-30 30-15v18",
      "M215 585v45q-10 15-8 0 M215 590l20-5v10",
      "M480 840l10 25q20 5 20 20l-20 30-20 15-5-20q-20 10-20-5l10-5-5-30 15 10z",
      "M745 620q-10-100 50-110q60 0 45 110 M745 600q-60-60-70 20q10 60 60 60 M840 600q60-50 75 20q0 60-60 60 M735 680q-40 50-10 80q40 10 60-40 M858 680q50 30 30 70q-40 20-70-30 M795 610q-70-10-50 75 M800 660q10-30 50-15q10 30 0 40 M780 720l10 75h45l5-60 M790 795L738 950l178-30-80-125 M770 860q20 10 30-30l20 10 10-20q10 60 40 30",
      "M550 540l110 30 10-80 M548 535l5-50 M620 560v-40q20-30 35 0v45",
      "M475 75q10-40 45-40 M530 120q-40-60-10-60q10 0 12 10q20-15 28 5q5 20-30 45z M560 60q60 20 80 40l-20 60-80-50 M475 75q0 30 40 25 M500 250q30-20 70 30 M455 295l60-55",
    ],
    ovals: [[343, 645, 18, 22], [313, 970, 103, 120], [313, 970, 86, 100], [313, 970, 20, 24], [594, 500, 13, 15], [537, 10, 24, 30], [596, 25, 30, 35], [640, 75, 23, 25]],
    small: [
      [45, 618], [137, 730], [34, 787], [197, 550], [662, 697], [713, 832], [586, 868], [520, 947], [897, 536], [920, 748],
      [887, 795], [540, 175], [462, 1008], [386, 490], [452, 35], [686, 22],
    ],
    medium: [[750, 68]],
    stamps: [["hex", 441, 573], ["plus", 532, 600, 45], ["lock", 590, 690, 20], ["lock", 643, 800, -15], ["plane", 545, 800], ["plane", 585, 225, -10]],
  },
];

const Canvas = styled.svg`
  position: absolute;
  inset: 0;
  width: 1080px;
  height: 2173px;
  fill: none;
  stroke: #20272b;
  stroke-width: 2px;
  stroke-linecap: round;
  stroke-linejoin: round;

  path,
  ellipse {
    vector-effect: non-scaling-stroke;
  }
`;

const Sheet = ({ d }: { d: SheetData }) => {
  const px = (x: number) => d.x + x * d.sx;
  const py = (y: number) => d.y + y * d.sy;
  const ring = (list: Dot[] | undefined, r: number) =>
    (list || []).map(([x, y], i) => <ellipse key={`${r}-${i}`} cx={px(x)} cy={py(y)} rx={r} ry={r} />);
  return (
    <g>
      <g transform={`translate(${d.x} ${d.y}) scale(${d.sx} ${d.sy})`}>
        {d.paths.map((p, i) => (
          <path key={i} d={p} />
        ))}
        {(d.ovals || []).map(([x, y, rx, ry], i) => (
          <ellipse key={i} cx={x} cy={y} rx={rx} ry={ry} />
        ))}
      </g>
      {ring(d.small, 4)}
      {ring(d.medium, 6.8)}
      {ring(d.large, 9.3)}
      {(d.stamps || []).map(([kind, x, y, rot = 0], i) => (
        <path key={i} d={STAMPS[kind]} transform={`translate(${px(x)} ${py(y)}) rotate(${rot})`} />
      ))}
    </g>
  );
};

const TILE_W = 766;
const TILE_H = 1360.5;

const Wallpaper = () => (
  <Canvas viewBox="0 227 1080 2173" aria-hidden="true">
    <defs>
      <g id="doodles">
        {SHEETS.map((d, i) => (
          <Sheet key={i} d={d} />
        ))}
      </g>
    </defs>
    {[-1, 0, 1].map((cx) =>
      [-1, 0, 1].map((cy) => <use key={`${cx}${cy}`} href="#doodles" x={cx * TILE_W} y={cy * TILE_H} />)
    )}
  </Canvas>
);

/* ------------------------------------------------------------------ */
/* Pixelated patches                                                    */
/* ------------------------------------------------------------------ */

type Px = [number, number, number, number, string];

const Pixels = ({ box, w, h, cells }: { box: string; w: number; h: number; cells: Px[] }) => (
  <svg width={w} height={h} viewBox={box} preserveAspectRatio="none" shapeRendering="crispEdges" aria-hidden="true">
    {cells.map(([x, y, cw, ch, c], i) => (
      <rect key={i} x={x} y={y} width={cw} height={ch} fill={c} />
    ))}
  </svg>
);

const CLOCK: Px[] = [
  [441, 102, 53, 18, "#20262a"], [494, 102, 52, 18, "#282d31"],
  [116, 120, 52, 54, "#707377"], [168, 120, 53, 54, "#262a2e"], [221, 120, 52, 54, "#4b4e51"], [273, 120, 52, 54, "#2f3337"],
  [325, 120, 52, 54, "#595d60"], [377, 120, 53, 54, "#3f4447"], [430, 120, 52, 54, "#23282c"], [482, 120, 52, 54, "#42464a"],
  [534, 120, 18, 54, "#2c3034"],
  [116, 174, 52, 33, "#4f5255"], [168, 174, 53, 33, "#404346"], [221, 174, 52, 33, "#3b3f41"], [273, 174, 52, 33, "#303437"],
  [325, 174, 52, 33, "#606466"], [377, 174, 53, 33, "#4f5356"], [430, 174, 52, 33, "#33373a"], [482, 174, 52, 36, "#565b5e"],
  [534, 174, 18, 33, "#393d40"],
  [598, 102, 52, 54, "#585b5e"], [650, 102, 53, 54, "#3c4043"], [703, 102, 52, 54, "#2a2e32"], [755, 102, 52, 54, "#979a9a"],
  [807, 102, 52, 54, "#2c3035"], [912, 102, 52, 54, "#101519"],
  [552, 156, 46, 54, "#12171a"], [598, 156, 52, 54, "#717476"], [650, 156, 53, 54, "#505456"], [703, 156, 52, 54, "#3e4346"],
  [755, 156, 52, 54, "#cfd1d1"], [807, 156, 52, 54, "#43474a"], [859, 156, 53, 54, "#13181b"], [912, 156, 52, 54, "#23282c"],
];

const NAME: Px[] = [
  [598, 427, 52, 53, "#0c1115"], [650, 427, 53, 53, "#1c2125"], [703, 427, 52, 53, "#303539"], [755, 427, 52, 53, "#1d2226"],
  [807, 427, 52, 53, "#43474b"], [859, 427, 157, 33, "#303439"], [1016, 427, 53, 33, "#202529"], [1069, 427, 32, 33, "#4b4f52"],
  [598, 480, 52, 54, "#303438"], [650, 480, 53, 54, "#42464a"], [703, 480, 52, 54, "#505458"], [755, 480, 52, 54, "#3a3f43"],
  [822, 460, 32, 32, "#5e6265"], [854, 460, 32, 32, "#3f4347"], [886, 460, 128, 32, "#373b40"], [1014, 460, 32, 32, "#3e4246"],
  [1046, 460, 31, 32, "#45494d"], [1077, 460, 32, 32, "#4b4f52"],
  [807, 480, 15, 56, "#8a8d90"], [822, 492, 32, 44, "#8e9194"], [854, 492, 32, 44, "#5c6063"], [886, 492, 32, 44, "#53575b"],
  [918, 492, 95, 34, "#494d51"], [918, 526, 95, 10, "#74777a"], [1013, 492, 33, 44, "#65696d"], [1046, 492, 31, 44, "#74787b"],
  [1077, 492, 32, 34, "#7c8083"], [1077, 526, 32, 10, "#8f9295"],
  [1109, 492, 32, 26, "#14191d"], [1141, 460, 32, 32, "#2c3135"], [1173, 460, 32, 32, "#717579"], [1205, 460, 20, 32, "#5c6064"],
  [1141, 492, 32, 33, "#171c20"], [1173, 492, 32, 33, "#83868a"], [1205, 492, 20, 33, "#53575b"], [1141, 525, 32, 11, "#9b9ea1"],
  [1173, 525, 32, 11, "#74787b"], [1205, 525, 20, 11, "#b1b4b6"],
];

const AVATAR: Px[] = [
  [441, 372, 53, 54, "#211c19"], [494, 372, 53, 54, "#0d1114"], [441, 426, 53, 56, "#412c23"], [441, 482, 53, 54, "#3c291f"],
  [494, 426, 53, 54, "#291d18"], [494, 480, 53, 56, "#30221b"],
];

const QUOTE: Px[] = [
  [344, 125, 24, 61, "#7d9295"], [368, 125, 24, 61, "#47685f"], [392, 125, 24, 61, "#6c8186"], [416, 125, 24, 40, "#3f6259"],
  [440, 125, 24, 40, "#5a7677"], [416, 165, 48, 21, "#798e95"], [464, 125, 24, 61, "#4c6d68"], [488, 125, 24, 61, "#5a7577"],
  [512, 125, 24, 61, "#6b8489"], [536, 125, 24, 61, "#75899a"], [586, 125, 24, 48, "#2a5245"], [586, 173, 24, 13, "#5d7a78"],
  [610, 125, 24, 48, "#597a75"], [610, 173, 42, 13, "#6d8588"], [634, 125, 18, 48, "#74899a"],
];

/* ------------------------------------------------------------------ */
/* Icons                                                                */
/* ------------------------------------------------------------------ */

interface GlyphProps {
  box: string;
  w: number;
  h: number;
  children: React.ReactNode;
}

const Glyph = ({ box, w, h, children }: GlyphProps) => (
  <svg width={w} height={h} viewBox={box} preserveAspectRatio="none" fill="none" strokeLinecap="round" strokeLinejoin="round">
    {children}
  </svg>
);

const HANDSET =
  "M7.5 3H4c-.55 0-1 .45-1 1 0 9.39 7.61 17 17 17 .55 0 1-.45 1-1v-3.49c0-.55-.45-1-1-1-1.24 0-2.45-.2-3.57-.57-.1-.04-.21-.05-.31-.05-.26 0-.51.1-.71.29l-2.2 2.2c-2.83-1.45-5.15-3.76-6.59-6.59l2.2-2.2c.28-.28.36-.67.25-1.02C8.7 6.45 8.5 5.25 8.5 4c0-.55-.45-1-1-1z";
const HANDSET_HOLES =
  "M6.54 5c.06.89.21 1.76.45 2.59l-1.2 1.2c-.41-1.2-.67-2.47-.76-3.79h1.51m9.86 12.02c.85.24 1.72.39 2.6.45v1.49c-1.32-.09-2.59-.35-3.8-.75l1.2-1.19";

const Alarm = () => (
  <Glyph box="0 0 28 30" w={28} h={30}>
    <circle cx="14" cy="16.5" r="11" stroke="#fff" strokeWidth="2.6" />
    <path d="M2.2 6.5L7 2.2M25.8 6.5L21 2.2" stroke="#fff" strokeWidth="2.8" />
    <path d="M14 10.5v7.2h4.6" stroke="#fff" strokeWidth="2.4" strokeLinecap="butt" strokeLinejoin="miter" />
  </Glyph>
);

const Waves = () => (
  <Glyph box="0 0 11 11" w={11} h={11}>
    <path d="M1 5.5A5 5 0 0 1 5.5 10M1 1.2A9 9 0 0 1 9.8 10" stroke="#fff" strokeWidth="1.7" />
  </Glyph>
);

const DataArrows = () => (
  <Glyph box="0 0 17 9" w={17} h={9}>
    <path d="M3 .5h3v4h2.4L4.5 9 .6 4.5H3zM11.5 9h3V4.5h2.4L13 0 9.1 4.5h2.4z" fill="#54585b" />
  </Glyph>
);

const Signal = ({ partial }: { partial?: boolean }) => (
  <Glyph box="0 0 27 27" w={27} h={27}>
    <path d="M0 27L27 0V27z" fill="#fff" />
    {partial && <path d="M15.5 16L24 7.5V24H15.5z" fill="#0b1014" />}
  </Glyph>
);

const Battery = () => (
  <Glyph box="0 0 17 28" w={17} h={28}>
    <path d="M5 0h7v3h3.5L17 4.5V26.5L15.5 28H1.5L0 26.5V4.5L1.5 3H5z" fill="#fff" />
    <path d="M3 5.5h11v19.5H3z" fill="#0b1014" />
    <path d="M3 22h11v3H3z" fill="#f5b31b" />
    <path d="M8.5 11v8M4.5 15h8" stroke="#fff" strokeWidth="2.5" strokeLinecap="butt" />
  </Glyph>
);

const BackArrow = () => (
  <Glyph box="0 0 34 34" w={34} h={34}>
    <path d="M18 2L3 17l15 15M3 17h31" stroke="#f7f8fa" strokeWidth="4" strokeLinecap="butt" strokeLinejoin="miter" />
  </Glyph>
);

const CallOutline = () => (
  <Glyph box="3 3 18 18" w={38} h={38}>
    <path d={`${HANDSET_HOLES}${HANDSET}`} fill="#f7f8fa" fillRule="evenodd" />
  </Glyph>
);

const Caret = () => (
  <Glyph box="0 0 18 12" w={18} h={12}>
    <path d="M2 2h14L9 10z" fill="#f7f8fa" stroke="#f7f8fa" strokeWidth="3" />
  </Glyph>
);

const Dots = () => (
  <Glyph box="0 0 10 36" w={10} h={36}>
    <g fill="#f7f8fa">
      <circle cx="5" cy="5.5" r="4.4" />
      <circle cx="5" cy="18" r="4.4" />
      <circle cx="5" cy="30.5" r="4.4" />
    </g>
  </Glyph>
);

const CallGlyph = ({ outgoing }: { outgoing?: boolean }) => (
  <Glyph box="0 0 24 24" w={43} h={43}>
    <path d={HANDSET} fill="#8b9196" />
    <path
      d={outgoing ? "M13.6 10.4L20.2 3.9M15.6 3.9h4.6v4.7" : "M20.2 3.9L13.7 10.2M13.7 5.6v4.7h4.6"}
      stroke="#8b9196"
      strokeWidth="1.8"
    />
  </Glyph>
);

const Ticks = () => (
  <Glyph box="1303 145 106 71" w={36} h={24}>
    <path d="M1308 190L1328 210L1371 150M1350 205L1358 210L1403 150" stroke="#93b5a7" strokeWidth="9.5" />
  </Glyph>
);

const CheckEmoji = () => (
  <Glyph box="0 0 41 41" w={41} h={41}>
    <defs>
      <linearGradient id="mint" x1="0" y1="0" x2="0" y2="1">
        <stop offset="0" stopColor="#84dfc4" />
        <stop offset="0.35" stopColor="#41bd97" />
        <stop offset="1" stopColor="#168a5e" />
      </linearGradient>
    </defs>
    <rect width="41" height="41" rx="11" fill="url(#mint)" />
    <path d="M7 21.5L16 29.5L34 11.5" stroke="#fff" strokeWidth="5" />
  </Glyph>
);

const Sticker = () => (
  <Glyph box="0 0 43 43" w={43} h={43}>
    <path
      d="M14 2h15a12 12 0 0 1 12 12v13c0 2-1 4-2 5l-6 7c-1.5 1.5-3 2-5 2H14A12 12 0 0 1 2 29V14A12 12 0 0 1 14 2z"
      stroke="#9a9fa2"
      strokeWidth="4"
    />
    <path d="M41 24h-6c-7 0-11 4-11 9v8" stroke="#9a9fa2" strokeWidth="4" />
    <path d="M12 25.5h17l-5 7c-6 0-10-3-12-7z" fill="#9a9fa2" stroke="#9a9fa2" />
    <circle cx="13.5" cy="14.5" r="3.4" fill="#9a9fa2" />
    <circle cx="29" cy="14.5" r="3.4" fill="#9a9fa2" />
  </Glyph>
);

const Clip = () => (
  <Glyph box="144 683 84 130" w={28} h={43}>
    <path d="M222 713V772a36 36 0 0 1-72 0V714a25.5 25.5 0 0 1 51 0V768a13 13 0 0 1-26 0V714" stroke="#8d9396" strokeWidth="10.5" />
  </Glyph>
);

const Rupee = () => (
  <Glyph box="431 683 130 130" w={43} h={43}>
    <circle cx="496" cy="748" r="59.5" stroke="#8d9396" strokeWidth="10" />
    <path
      d="M479 725h39M479 739h39M479 725h13c20 0 20 28 0 28h-12l26 27"
      stroke="#8d9396"
      strokeWidth="6.5"
      strokeLinecap="butt"
      strokeLinejoin="miter"
    />
  </Glyph>
);

const Camera = () => (
  <Glyph box="737 688 131 120" w={43.5} h={40}>
    <path d="M750 710h27l12-15h28l12 15h27q6 0 6 6v79q0 6-6 6H749q-6 0-6-6v-79q0-6 7-6z" stroke="#8d9396" strokeWidth="10.5" />
    <circle cx="803" cy="755" r="23" stroke="#8d9396" strokeWidth="11.5" />
  </Glyph>
);

const Mic = () => (
  <Glyph box="1090 679 92 126" w={30.6} h={42}>
    <rect x="1117" y="681" width="38" height="76" rx="19" fill="#0a1014" />
    <path d="M1097 743c0 24 17 35 38.5 35s38.5-11 38.5-35" stroke="#0a1014" strokeWidth="10" />
    <path d="M1135.5 780v20" stroke="#0a1014" strokeWidth="10" />
  </Glyph>
);

/* ------------------------------------------------------------------ */
/* Chrome                                                               */
/* ------------------------------------------------------------------ */

const Phone = styled.div`
  width: 1080px;
  height: 2400px;
  display: flex;
  flex-direction: column;
  overflow: hidden;
  background: #0a1014;
  color: #f7f8fa;
  font-family: ${FONT};

  svg {
    display: block;
    flex: none;
  }
`;

const StatusBar = styled.div`
  height: 108px;
  flex: none;
  display: flex;
  align-items: center;
  padding: 0 38px 0 40px;
  background: #0b1014;
`;

const StatusClock = styled.div`
  margin-top: -4px;
`;

const StatusIcons = styled.div`
  margin-left: auto;
  display: flex;
  align-items: center;
`;

const Space = styled.span<{ w: number }>`
  width: ${(p) => p.w}px;
  flex: none;
`;

const VoNr = styled.div`
  width: 29px;
  display: flex;
  flex-direction: column;
  font: 600 14.5px/13.5px Roboto, sans-serif;
`;

const VoRow = styled.div`
  display: flex;
  align-items: center;
  gap: 1px;
  letter-spacing: -0.3px;
`;

const NetType = styled.div`
  width: 34px;
  margin-top: -4px;
  display: flex;
  flex-direction: column;
  align-items: center;
  gap: 4px;
  font: 500 21px/17px Roboto, sans-serif;
  letter-spacing: -1px;
`;

const Header = styled.header`
  height: 119px;
  flex: none;
  display: flex;
  align-items: center;
  padding: 0 42px 0 35px;
  background: #0b1014;
  border-bottom: 1px solid #1d2326;
`;

const Avatar = styled.div`
  position: relative;
  width: 77px;
  height: 77px;
  margin-left: 42px;
  border-radius: 50%;
  background: #36271f;
  color: #e2a88f;
  display: flex;
  align-items: center;
  padding-left: 27px;
  font: 400 36px/1 Lato, sans-serif;
`;

const AvatarPatch = styled.div`
  position: absolute;
  left: 41px;
  top: -5px;
`;

const Title = styled.h1`
  margin: 0 auto 0 18px;
  display: flex;
  align-items: center;
  font: 400 35.5px/36px Lato, sans-serif;
  letter-spacing: -2.3px;
`;

const TitleDigits = styled.span`
  margin-left: -4px;
  padding-top: 1px;
`;

const TitlePatch = styled.span`
  position: relative;
  z-index: 1;
`;

/* ------------------------------------------------------------------ */
/* Chat                                                                 */
/* ------------------------------------------------------------------ */

const Chat = styled.main`
  position: relative;
  flex: 1;
  display: flex;
  flex-direction: column;
`;

const Row = styled.div<{ out?: boolean; gap: number }>`
  position: relative;
  display: flex;
  justify-content: ${(p) => (p.out ? "flex-end" : "flex-start")};
  margin-top: ${(p) => p.gap}px;
  padding: 0 36px 0 37px;
`;

const Bubble = styled.div<{ out?: boolean; w: number; tail?: boolean }>`
  position: relative;
  width: ${(p) => p.w}px;
  background: ${(p) => (p.out ? "#144d37" : "#1f272a")};
  border-radius: 28px;
  ${(p) => p.tail && (p.out ? "border-top-right-radius: 0;" : "border-top-left-radius: 0;")}
`;

const TailShape = styled.svg<{ out?: boolean }>`
  position: absolute;
  top: 0;
  ${(p) => (p.out ? "right: -15px;" : "left: -15px; transform: scaleX(-1);")}
`;

const Tail = ({ out }: { out?: boolean }) => (
  <TailShape out={out} width="16" height="22" viewBox="0 0 16 22">
    <path d="M0 0h13q4 1.5 2.5 4.5L1 21.5H0z" fill={out ? "#144d37" : "#1f272a"} />
  </TailShape>
);

const TextLine = styled.div`
  height: 64.7px;
  display: flex;
  justify-content: space-between;
  padding: 0 19px 0 20px;
`;

const Body = styled.span`
  padding-top: 11.5px;
  font-size: 28.7px;
  line-height: 36px;
  letter-spacing: -0.15px;
  white-space: nowrap;
`;

const Stamp = styled.span<{ out?: boolean; top: number }>`
  display: flex;
  align-items: flex-start;
  gap: 8px;
  padding-top: ${(p) => p.top}px;
  font-size: 25px;
  line-height: 30px;
  letter-spacing: 0.6px;
  white-space: nowrap;
  color: ${(p) => (p.out ? "#93b5a7" : "#9a9fa2")};
`;

const TicksBox = styled.span`
  padding-top: 1px;
`;

interface MsgProps {
  text: string;
  time: string;
  w: number;
  gap: number;
  out?: boolean;
  tail?: boolean;
}

const Time = ({ time, out, top }: { time: string; out?: boolean; top: number }) => (
  <Stamp out={out} top={top}>
    {time}
    {out && (
      <TicksBox>
        <Ticks />
      </TicksBox>
    )}
  </Stamp>
);

const Message = ({ text, time, w, gap, out, tail }: MsgProps) => (
  <Row out={out} gap={gap}>
    <Bubble out={out} w={w} tail={tail}>
      {tail && <Tail out={out} />}
      <TextLine>
        <Body>{text}</Body>
        <Time time={time} out={out} top={out ? 26 : 28} />
      </TextLine>
    </Bubble>
  </Row>
);

const CallCard = styled.div<{ out?: boolean }>`
  margin: 8.5px 8px;
  height: 129px;
  display: flex;
  padding: 22px 19px 0 17px;
  border-radius: 20px;
  background: ${(p) => (p.out ? "#144332" : "#1d2429")};
`;

const CallDisc = styled.div<{ out?: boolean }>`
  width: 85px;
  height: 85px;
  flex: none;
  border-radius: 50%;
  display: flex;
  align-items: center;
  justify-content: center;
  background: ${(p) => (p.out ? "#2f5647" : "#353941")};
`;

const CallText = styled.div`
  margin: -2.5px auto 0 16px;
  display: flex;
  flex-direction: column;
`;

const CallTitle = styled.span`
  font-size: 30px;
  line-height: 40px;
  font-weight: 700;
  letter-spacing: -0.1px;
  white-space: nowrap;
`;

const CallLength = styled.span<{ out?: boolean }>`
  font-size: 28.7px;
  line-height: 40px;
  white-space: nowrap;
  color: ${(p) => (p.out ? "#93b5a7" : "#a2a6a9")};
`;

const CallTime = styled.span<{ out?: boolean }>`
  margin-left: -60px;
  padding-top: 57.5px;
  font-size: 25px;
  line-height: 30px;
  letter-spacing: 0.6px;
  white-space: nowrap;
  color: ${(p) => (p.out ? "#93b5a7" : "#a2a6a9")};
`;

const Call = ({ length, time, w, gap, out }: { length: string; time: string; w: number; gap: number; out?: boolean }) => (
  <Row out={out} gap={gap}>
    <Bubble out={out} w={w} tail>
      <Tail out={out} />
      <CallCard out={out}>
        <CallDisc out={out}>
          <CallGlyph outgoing={out} />
        </CallDisc>
        <CallText>
          <CallTitle>Voice call</CallTitle>
          <CallLength out={out}>{length}</CallLength>
        </CallText>
        <CallTime out={out}>{time}</CallTime>
      </CallCard>
    </Bubble>
  </Row>
);

const SharedBubble = styled(Bubble)`
  height: 570px;
  border-radius: 0 0 28px 28px;
  display: flex;
  flex-direction: column;
  padding: 0 20px 0 20px;
`;

const SharedImage = styled.div`
  height: 237px;
  flex: none;
  margin: 0 -11px 0 -12px;
  background: #fff;
  border-radius: 0 0 16px 16px;
`;

const Copy = styled.p<{ top: number }>`
  margin: ${(p) => p.top}px 0 0;
  font-size: 28.7px;
  line-height: 35.75px;
  letter-spacing: 0;
  white-space: nowrap;
`;

const PaidLine = styled(Copy)`
  display: flex;
  align-items: center;
  gap: 10px;
  height: 41px;
  letter-spacing: -0.4px;
`;

const Link = styled.a`
  color: #53bdeb;
  text-decoration: underline;
  text-decoration-thickness: 2px;
  text-underline-offset: 4px;
  text-decoration-skip-ink: none;
`;

const StampRow = styled.div`
  display: flex;
  justify-content: flex-end;
  margin-right: -1px;
`;

const Quote = styled.div`
  margin: 9px 9px 0 8px;
  height: 102px;
  display: flex;
  border-radius: 18px;
  overflow: hidden;
  background: #144332;
`;

const QuoteBar = styled.div`
  width: 9px;
  background: #a791ff;
`;

const QuoteText = styled.div`
  padding: 15px 0 0 18px;
`;

const QuoteName = styled.div`
  display: flex;
  align-items: center;
  height: 34px;
  font: 400 26px/34px Lato, sans-serif;
  letter-spacing: -1.4px;
  color: #d0c6fb;
`;

const QuotePatch = styled.span`
  position: relative;
  z-index: 1;
  margin: 0 -4px 0 -6px;
`;

const QuoteBody = styled.div`
  margin-top: 2px;
  font-size: 29px;
  line-height: 38px;
  letter-spacing: 0.9px;
  color: #93b5a7;
`;

const ReplyBubble = styled(Bubble)`
  display: flow-root;
`;

const ReplyLine = styled(TextLine)`
  height: 59px;
`;

const ReplyBody = styled(Body)`
  padding-top: 8px;
`;

/* ------------------------------------------------------------------ */
/* Composer                                                             */
/* ------------------------------------------------------------------ */

const Composer = styled.footer`
  position: relative;
  display: flex;
  align-items: flex-end;
  gap: 10px;
  margin: 24px 0 0 10px;
`;

const Field = styled.div`
  width: 947px;
  height: 100px;
  border-radius: 50px;
  display: flex;
  align-items: center;
  padding: 0 28px 0 29px;
  background: #1f272a;
`;

const Cursor = styled.span`
  width: 4px;
  height: 51px;
  margin-left: 29px;
  background: #22b765;
`;

const Placeholder = styled.span`
  margin: 0 auto 0 -3px;
  padding-top: 2px;
  font-size: 35.2px;
  line-height: 44px;
  color: #8d9396;
`;

const MicButton = styled.button`
  width: 102px;
  height: 102px;
  padding: 0;
  border: 0;
  border-radius: 50%;
  display: flex;
  align-items: center;
  justify-content: center;
  background: #22c264;
`;

export default function App() {
  return (
    <Phone>
      <GlobalStyle />
      <StatusBar>
        <StatusClock>
          <Pixels box="116 102 848 108" w={292} h={36} cells={CLOCK} />
        </StatusClock>
        <StatusIcons>
          <Alarm />
          <Space w={12} />
          <VoNr>
            <VoRow>
              Vo
              <Waves />
            </VoRow>
            <span>NR</span>
          </VoNr>
          <Space w={5} />
          <NetType>
            5G+
            <DataArrows />
          </NetType>
          <Space w={5} />
          <Signal />
          <Space w={11} />
          <Signal partial />
          <Space w={15} />
          <Battery />
        </StatusIcons>
      </StatusBar>

      <Header>
        <BackArrow />
        <Avatar>
          F
          <AvatarPatch>
            <Pixels box="441 372 106 164" w={36.5} h={54.7} cells={AVATAR} />
          </AvatarPatch>
        </Avatar>
        <Title>
          <TitlePatch>
            <Pixels box="598 427 627 109" w={216} h={36.4} cells={NAME} />
          </TitlePatch>
          <TitleDigits>5019</TitleDigits>
        </Title>
        <CallOutline />
        <Space w={25} />
        <Caret />
        <Space w={43} />
        <Dots />
      </Header>

      <Chat>
        <Wallpaper />

        <Row out gap={0}>
          <SharedBubble out w={701}>
            <SharedImage />
            <PaidLine top={18}>
              Paid using Google Pay! <CheckEmoji />
            </PaidLine>
            <Copy top={41}>
              I trust Google Pay for fast, safe, and reliable
              <br />
              payments. Tap and instantly verify the updated
              <br />
              balance in your bank account.
              <br />
              <br />
              <Link>https://gpay.app.goo.gl/Check_your_balance</Link>
            </Copy>
            <StampRow>
              <Time time="4:48 pm" out top={17} />
            </StampRow>
          </SharedBubble>
        </Row>

        <Row out gap={4}>
          <ReplyBubble out w={435}>
            <Quote>
              <QuoteBar />
              <QuoteText>
                <QuoteName>
                  +91 8
                  <QuotePatch>
                    <Pixels box="344 125 308 61" w={102.7} h={20.3} cells={QUOTE} />
                  </QuotePatch>
                  5019
                </QuoteName>
                <QuoteBody>278000</QuoteBody>
              </QuoteText>
            </Quote>
            <ReplyLine>
              <ReplyBody>Aaj ho jayega na?</ReplyBody>
              <Time time="5:08 pm" out top={22} />
            </ReplyLine>
          </ReplyBubble>
        </Row>

        <Call length="19 secs" time="5:25 pm" w={372} gap={22} />
        <Message out tail text="Sr any update?" time="6:24 pm" w={403} gap={22} />
        <Call length="4 mins" time="6:25 pm" w={375} gap={21.3} />
        <Message tail text="Hi" time="7:42 pm" w={195} gap={22} />
        <Message out tail text="Pls update" time="7:42 pm" w={341} gap={21} />
        <Message tail text="Sir update karna hi padega" time="7:42 pm" w={524} gap={21.6} />
        <Message text="80k" time="7:42 pm" w={220} gap={3.3} />
        <Message text="Uske bad ayega total amount" time="7:43 pm" w={561} gap={3.3} />
        <Message out tail text="Nhi kr sakta" time="7:43 pm" w={360} gap={21.3} />
        <Message out text="Aap mera 50k wapis krwa do" time="7:43 pm" w={593} gap={3.2} />
        <Message tail text="Wo chadwa diya" time="7:43 pm" w={389} gap={21.4} />
        <Message text="Mene server par" time="7:43 pm" w={382} gap={3.3} />
        <Call out length="6 mins" time="7:43 pm" w={375} gap={21.3} />

        <Composer>
          <Field>
            <Sticker />
            <Cursor />
            <Placeholder>Message</Placeholder>
            <Clip />
            <Space w={68} />
            <Rupee />
            <Space w={59} />
            <Camera />
          </Field>
          <MicButton aria-label="Record voice message">
            <Mic />
          </MicButton>
        </Composer>
      </Chat>
    </Phone>
  );
}
